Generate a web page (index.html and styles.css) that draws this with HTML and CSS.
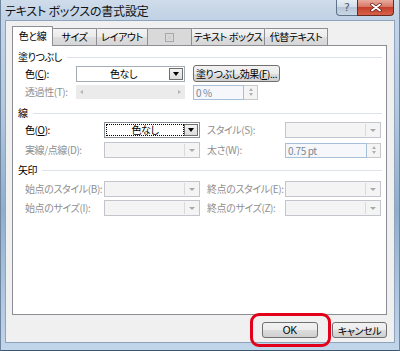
FILE: index.html
```html
<!DOCTYPE html>
<html lang="ja">
<head>
<meta charset="utf-8">
<title>テキスト ボックスの書式設定</title>
<link rel="stylesheet" href="styles.css">
</head>
<body>
<div class="window">
  <div class="titlebar">
    <span class="title">テキスト ボックスの書式設定</span>
    <div class="caption-btns">
      <div class="cap help">?</div>
      <div class="cap close">
        <svg width="12" height="9" viewBox="0 0 12 9"><path d="M2 1.5 L10 7.5 M10 1.5 L2 7.5" stroke="#5a1a10" stroke-width="3.4" stroke-linecap="round"/><path d="M2 1.5 L10 7.5 M10 1.5 L2 7.5" stroke="#ffffff" stroke-width="2" stroke-linecap="round"/></svg>
      </div>
    </div>
  </div>
  <div class="client">
    <div class="tabs">
      <div class="tab selected w41">色と線</div>
      <div class="tab w44">サイズ</div>
      <div class="tab w51">レイアウト</div>
      <div class="tab disabled w44">
        <svg width="9" height="9" viewBox="0 0 9 9"><rect x="0.5" y="0.5" width="8" height="8" fill="none" stroke="#a8a8a8"/><path d="M2.5 2.5 L6.5 6.5 M6.5 2.5 L2.5 6.5" stroke="#c0c0c0" stroke-width="1"/><rect x="3" y="3" width="3" height="3" fill="#d0d0d0"/></svg>
      </div>
      <div class="tab w73">テキスト ボックス</div>
      <div class="tab w63">代替テキスト</div>
    </div>
    <div class="panel">
      <div class="section s1"><span>塗りつぶし</span><div class="rule"></div></div>
      <div class="row r1">
        <span class="lbl lbl-a">色(<u>C</u>):</span>
        <div class="combo combo-fill"><span class="combo-text">色なし</span><span class="combo-btn"><span class="tri"></span></span></div>
        <div class="btn btn-effect">塗りつぶし効果(<u>F</u>)...</div>
      </div>
      <div class="row r2">
        <span class="lbl lbl-a dis">透過性(T):</span>
        <div class="slider"><span class="sl-arrow left"></span><span class="sl-arrow right"></span></div>
        <div class="spin spin-small"><span class="spin-text">0 %</span><span class="spin-btns"><span class="up"></span><span class="down"></span></span></div>
      </div>
      <div class="section s2"><span>線</span><div class="rule"></div></div>
      <div class="row r3">
        <span class="lbl lbl-b">色(<u>O</u>):</span>
        <div class="combo combo-line"><span class="combo-text focus">色なし</span><span class="combo-btn"><span class="tri"></span></span></div>
        <span class="lbl lbl-c dis">スタイル(S):</span>
        <div class="combo combo-dis"><span class="combo-text"></span><span class="combo-btn"><span class="tri"></span></span></div>
      </div>
      <div class="row r4">
        <span class="lbl lbl-b dis">実線/点線(D):</span>
        <div class="combo combo-dis"><span class="combo-text"></span><span class="combo-btn"><span class="tri"></span></span></div>
        <span class="lbl lbl-c dis">太さ(W):</span>
        <div class="spin spin-wide"><span class="spin-text">0.75 pt</span><span class="spin-btns"><span class="up"></span><span class="down"></span></span></div>
      </div>
      <div class="section s3"><span>矢印</span><div class="rule"></div></div>
      <div class="row r5">
        <span class="lbl lbl-b dis">始点のスタイル(B):</span>
        <div class="combo combo-dis"><span class="combo-text"></span><span class="combo-btn"><span class="tri"></span></span></div>
        <span class="lbl lbl-c dis">終点のスタイル(E):</span>
        <div class="combo combo-dis"><span class="combo-text"></span><span class="combo-btn"><span class="tri"></span></span></div>
      </div>
      <div class="row r6">
        <span class="lbl lbl-b dis">始点のサイズ(I):</span>
        <div class="combo combo-dis"><span class="combo-text"></span><span class="combo-btn"><span class="tri"></span></span></div>
        <span class="lbl lbl-c dis">終点のサイズ(Z):</span>
        <div class="combo combo-dis"><span class="combo-text"></span><span class="combo-btn"><span class="tri"></span></span></div>
      </div>
    </div>
    <div class="footer">
      <div class="btn btn-ok">OK</div>
      <div class="btn btn-cancel">キャンセル</div>
    </div>
  </div>
  <div class="highlight"></div>
</div>
</body>
</html>
```
FILE: styles.css
```css
html, body {
  margin: 0;
  padding: 0;
  background: #ffffff;
}
body {
  font-family: "Noto Sans CJK JP", "Noto Sans", sans-serif;
  font-size: 10px;
  letter-spacing: -0.4px;
  font-feature-settings: "palt";
  color: #000;
}
.window {
  position: relative;
  width: 400px;
  height: 351px;
  box-sizing: border-box;
  background: linear-gradient(to bottom, #c6d7ea 0%, #b3c9e0 30%, #8fadcb 60%, #a9c2dc 80%, #c2d6ea 100%);
  border-left: 1px solid #6e86a0;
  border-right: 1px solid #6e86a0;
  border-bottom: 1px solid #3d5670;
  overflow: hidden;
}
.titlebar {
  height: 20px;
  display: flex;
  justify-content: space-between;
  align-items: flex-start;
  background: linear-gradient(to bottom, #cfdcea, #c0d2e5);
}
.title {
  margin-left: 4px;
  margin-top: 3px;
  font-size: 12px;
  letter-spacing: -0.2px;
  line-height: 15px;
  color: #111;
}
.caption-btns {
  display: flex;
  margin-right: 5px;
}
.cap {
  height: 16px;
  box-sizing: border-box;
  display: flex;
  align-items: center;
  justify-content: center;
  border: 1px solid #5e728a;
  border-top: none;
}
.help {
  width: 21px;
  border-radius: 0 0 0 4px;
  border-right: none;
  background: linear-gradient(to bottom, #e6edf4 0%, #d3dde8 45%, #b7c7d8 50%, #c9d6e3 100%);
  color: #4a5a70;
  font-family: "DejaVu Sans", sans-serif;
  font-size: 11px;
  letter-spacing: 0;
  line-height: 14px;
}
.close {
  width: 37px;
  border-radius: 0 0 4px 0;
  border-color: #6a2a20;
  background: linear-gradient(to bottom, #e9aa9d 0%, #d77866 45%, #c5402c 50%, #d8614a 100%);
}
.client {
  margin: 0 4px 0 4px;
  height: 323px;
  box-sizing: border-box;
  background: #f0f0f0;
  border: 1px solid #8ea4bc;
  padding: 5px 6px 0 6px;
}
.tabs {
  display: flex;
  align-items: flex-start;
  height: 19px;
}
.tab {
  box-sizing: border-box;
  height: 17px;
  margin-top: 2px;
  border: 1px solid #8c8e94;
  border-left: none;
  border-bottom: none;
  background: linear-gradient(to bottom, #f3f3f3 0%, #ebebeb 50%, #dedede 51%, #d6d6d6 100%);
  display: flex;
  align-items: center;
  justify-content: center;
  line-height: 14px;
  white-space: nowrap;
  border-radius: 1px 1px 0 0;
}
.tab.selected {
  position: relative;
  z-index: 1;
  height: 20px;
  margin-top: 0;
  background: #ffffff;
  border-left: 1px solid #8c8e94;
  padding-bottom: 2px;
}
.tab.disabled {
  background: #d9d9d9;
}
.w41 { width: 41px; }
.w44 { width: 44px; }
.w51 { width: 51px; }
.w73 { width: 73px; }
.w63 { width: 63px; }
.panel {
  box-sizing: border-box;
  width: 375px;
  height: 270px;
  background: #ffffff;
  border: 1px solid #8c8e94;
  padding: 4px 4px 0 0;
  display: flex;
  flex-direction: column;
}
.section {
  display: flex;
  align-items: center;
  height: 14px;
  line-height: 14px;
  padding-left: 5px;
}
.rule {
  flex: 1;
  height: 1px;
  background: #dde2e8;
  margin-left: 5px;
}
.s2 { margin-top: 6px; }
.s3 { margin-top: 5px; }
.row {
  display: flex;
  align-items: center;
  height: 16px;
  padding-left: 12px;
}
.r1 { margin-top: 1px; height: 17px; }
.r2 { margin-top: 2px; }
.r3 { margin-top: 2px; }
.r4 { margin-top: 4px; }
.r5 { margin-top: 4px; }
.r6 { margin-top: 3px; }
.lbl {
  white-space: nowrap;
  line-height: 14px;
}
.lbl-a { width: 51px; }
.lbl-b { width: 79px; }
.lbl-c { width: 78px; margin-left: 7px; }
.dis { color: #8f8f8f; }
.combo {
  box-sizing: border-box;
  height: 16px;
  display: flex;
  border: 1px solid #a5acb5;
  background: #ffffff;
  padding: 1px;
}
.combo-fill { width: 109px; }
.combo-line { width: 96px; border-color: #8a9099; }
.combo-dis { width: 96px; background: #f4f4f4; border-color: #c2c6cc; }
.combo-text {
  flex: 1;
  text-align: center;
  line-height: 12px;
  box-sizing: border-box;
}
.combo-text.focus {
  border: 1px dotted #000;
  line-height: 10px;
}
.combo-btn {
  width: 14px;
  box-sizing: border-box;
  border: 1px solid #6f6f6f;
  background: linear-gradient(to bottom, #f4f4f4, #dcdcdc);
  display: flex;
  align-items: center;
  justify-content: center;
}
.tri {
  width: 0;
  height: 0;
  border-left: 3.5px solid transparent;
  border-right: 3.5px solid transparent;
  border-top: 4px solid #000;
}
.combo-dis .combo-btn {
  border: none;
  border-left: 1px solid #dadada;
  background: transparent;
}
.combo-dis .tri {
  border-left-width: 3px;
  border-right-width: 3px;
  border-top: 3px solid #a9a9a9;
}
.btn {
  box-sizing: border-box;
  border: 1px solid #707070;
  border-radius: 3px;
  background: linear-gradient(to bottom, #f2f2f2 0%, #ebebeb 50%, #dddddd 51%, #cfcfcf 100%);
  display: flex;
  align-items: center;
  justify-content: center;
  line-height: 13px;
  white-space: nowrap;
}
.btn-effect {
  width: 87px;
  height: 17px;
  margin-left: 8px;
}
.slider {
  position: relative;
  width: 109px;
  height: 14px;
  background: #ebebeb;
  display: flex;
  align-items: center;
  justify-content: space-between;
  padding: 0 4px;
  box-sizing: border-box;
}
.sl-arrow {
  width: 0;
  height: 0;
  border-top: 2.5px solid transparent;
  border-bottom: 2.5px solid transparent;
}
.sl-arrow.left { border-right: 3px solid #b4b4b4; }
.sl-arrow.right { border-left: 3px solid #b4b4b4; }
.spin {
  box-sizing: border-box;
  height: 15px;
  display: flex;
}
.spin-small { width: 65px; margin-left: 8px; }
.spin-wide { width: 96px; }
.spin-text {
  flex: 1;
  box-sizing: border-box;
  border: 1px solid #a7c0da;
  background: #f5f7fa;
  color: #7d8796;
  line-height: 13px;
  padding-left: 2px;
}
.spin-btns {
  width: 14px;
  box-sizing: border-box;
  border: 1px solid #c9c9c9;
  border-left: none;
  background: #f4f4f4;
  display: flex;
  flex-direction: column;
  align-items: center;
  justify-content: space-around;
  padding: 2px 0;
}
.spin-btns .up {
  width: 0;
  height: 0;
  border-left: 2.5px solid transparent;
  border-right: 2.5px solid transparent;
  border-bottom: 3px solid #b0b0b0;
}
.spin-btns .down {
  width: 0;
  height: 0;
  border-left: 2.5px solid transparent;
  border-right: 2.5px solid transparent;
  border-top: 3px solid #b0b0b0;
}
.footer {
  display: flex;
  justify-content: flex-end;
  gap: 14px;
  margin-top: 7px;
  width: 375px;
}
.btn-ok {
  width: 56px;
  height: 16px;
  font-family: "Liberation Sans", sans-serif;
  font-size: 10px;
  letter-spacing: 0;
}
.btn-cancel { width: 55px; height: 16px; }
.highlight {
  position: absolute;
  left: 249px;
  top: 313px;
  width: 81px;
  height: 34px;
  box-sizing: border-box;
  border: 3px solid #e2001a;
  border-radius: 9px;
}
```
